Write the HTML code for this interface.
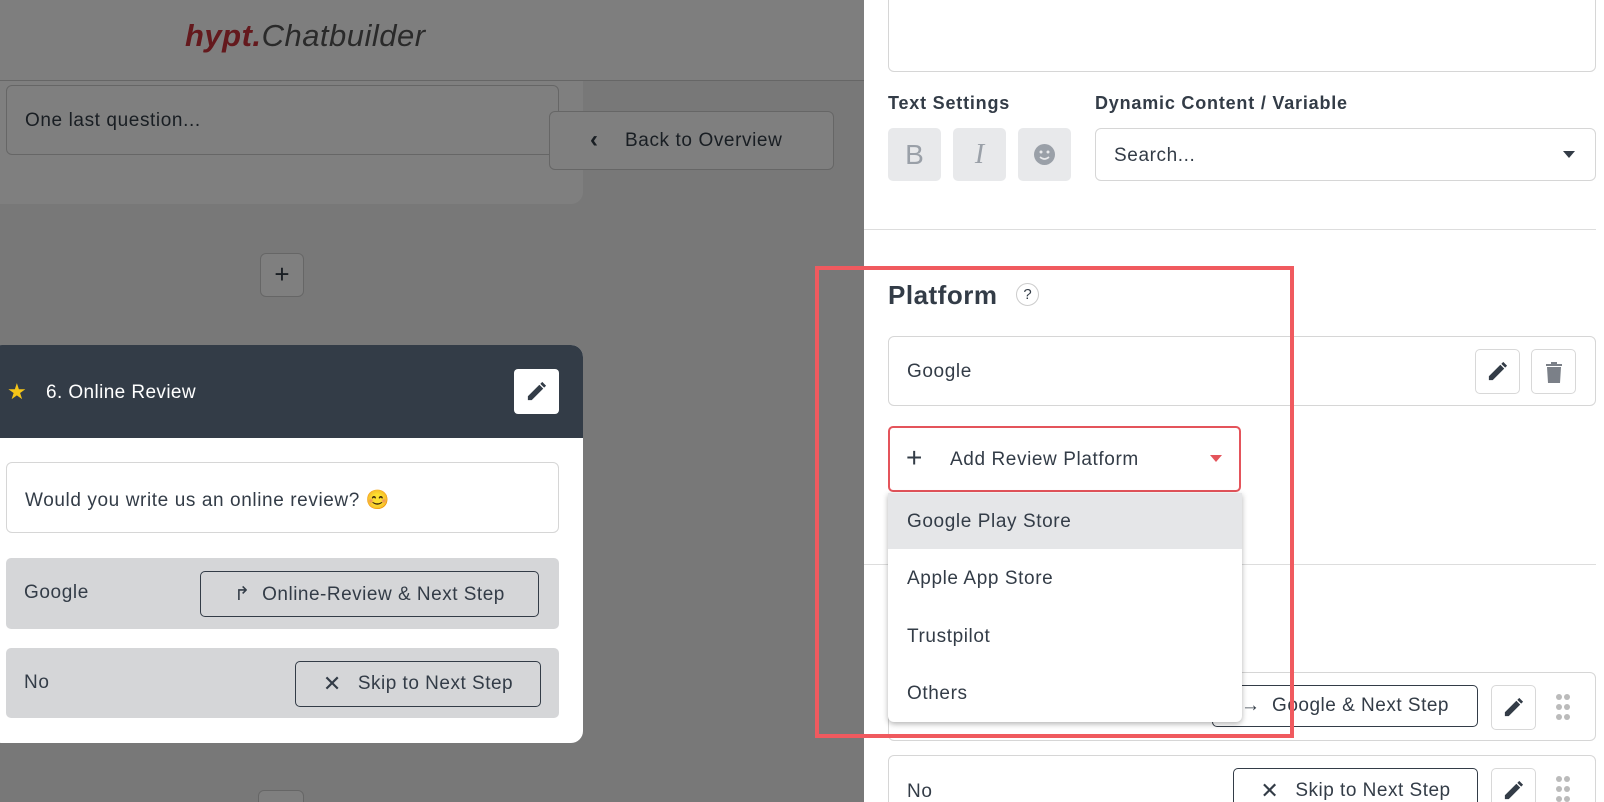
<!DOCTYPE html>
<html style="width:1604px;height:802px;overflow:hidden"><head><meta charset="utf-8"><style>
*{box-sizing:border-box;margin:0;padding:0}
body{width:1604px;height:802px;overflow:hidden;position:relative;background:#f1f1f1;font-family:"Liberation Sans",sans-serif;color:#333c47}
.a{position:absolute}
.box{position:absolute;border:1px solid #d6d6d6;border-radius:6px;background:#fff}
.btn{position:absolute;border:1px solid #333c47;border-radius:5px;display:flex;align-items:center;justify-content:center;gap:16px;font-size:19px;letter-spacing:.5px;color:#333c47;background:transparent}
.ib{position:absolute;border:1px solid #d8d8d8;border-radius:5px;background:#fff;display:flex;align-items:center;justify-content:center}
.t{font-size:19px;letter-spacing:.6px}
</style></head><body>
<div class="a" style="left:0;top:0;width:864px;height:81px;background:#fdfdfd;border-bottom:1px solid #ccc"></div>
<div class="a" style="left:185px;top:18px;font-size:31px;font-style:italic;letter-spacing:.5px"><span style="color:#c8323b;font-weight:bold">hypt.</span><span style="color:#555">Chatbuilder</span></div>
<div class="a" style="left:-10px;top:81px;width:593px;height:123px;background:#fff;border-radius:0 0 12px 0"></div>
<div class="box" style="left:6px;top:85px;width:553px;height:70px;border-color:#ccc"><span class="a t" style="left:18px;top:24px">One last question...</span></div>
<div class="box" style="left:549px;top:111px;width:285px;height:59px;border-color:#ccc"><span class="a" style="left:40px;top:14px;font-size:24px;font-weight:bold">‹</span><span class="a t" style="left:75px;top:18px">Back to Overview</span></div>
<div class="box" style="left:260px;top:253px;width:44px;height:44px;border-color:#ccc;font-size:26px;text-align:center;line-height:40px">+</div>
<div class="box" style="left:258px;top:790px;width:46px;height:40px;border-color:#ccc"></div>
<div class="a" style="left:0;top:0;width:864px;height:802px;background:rgba(0,0,0,0.5)"></div>
<div class="a" style="left:-10px;top:345px;width:593px;height:398px;background:#fff;border-radius:12px;overflow:hidden">
 <div class="a" style="left:0;top:0;width:593px;height:93px;background:#333c47"></div>
 <span class="a" style="left:17px;top:34px;font-size:22px;color:#f5c518">★</span>
 <span class="a" style="left:56px;top:37px;font-size:19px;letter-spacing:.4px;color:#fff">6. Online Review</span>
 <div class="a" style="left:524px;top:24px;width:45px;height:45px;background:#fff;border-radius:4px"><svg class="a" style="left:11px;top:11px" width="23" height="23" viewBox="0 0 24 24"><path d="M3 21v-4L15 5l4 4L7 21z M16 4l2-2 4 4-2 2z" fill="#333c47"/></svg></div>
 <div class="box" style="left:16px;top:117px;width:553px;height:71px"><span class="a t" style="left:18px;top:25px">Would you write us an online review? 😊</span></div>
 <div class="a" style="left:16px;top:213px;width:553px;height:71px;background:#d5d6d8;border-radius:5px"><span class="a t" style="left:18px;top:24px">Google</span>
  <div class="btn" style="left:194px;top:13px;width:339px;height:46px">↱ &nbsp;Online-Review &amp; Next Step</div></div>
 <div class="a" style="left:16px;top:303px;width:553px;height:70px;background:#d5d6d8;border-radius:5px"><span class="a t" style="left:18px;top:24px">No</span>
  <div class="btn" style="left:289px;top:13px;width:246px;height:46px"><span style="font-size:22px">✕</span>Skip to Next Step</div></div>
</div>
<div class="a" style="left:864px;top:0;width:740px;height:802px;background:#fff"></div>
<div class="box" style="left:888px;top:-10px;width:708px;height:82px"></div>
<div class="a" style="left:888px;top:93px;font-size:18px;font-weight:bold;letter-spacing:.8px">Text Settings</div>
<div class="a" style="left:1095px;top:93px;font-size:18px;font-weight:bold;letter-spacing:.8px">Dynamic Content / Variable</div>
<div class="a" style="left:888px;top:128px;width:53px;height:53px;background:#e8e9eb;border-radius:5px;color:#9aa0a8;font-size:28px;text-align:center;line-height:53px">B</div>
<div class="a" style="left:953px;top:128px;width:53px;height:53px;background:#e8e9eb;border-radius:5px;color:#9aa0a8;font-size:28px;font-style:italic;text-align:center;line-height:53px;font-family:'Liberation Serif',serif">I</div>
<div class="a" style="left:1018px;top:128px;width:53px;height:53px;background:#e8e9eb;border-radius:5px"><svg class="a" style="left:16px;top:16px" width="21" height="21" viewBox="0 0 21 21"><circle cx="10.5" cy="10.5" r="10.5" fill="#9aa0a8"/><circle cx="7" cy="8" r="1.5" fill="#e8e9eb"/><circle cx="14" cy="8" r="1.5" fill="#e8e9eb"/><path d="M6 13q4.5 4 9 0" stroke="#e8e9eb" stroke-width="1.6" fill="none"/></svg></div>
<div class="box" style="left:1095px;top:128px;width:501px;height:53px"><span class="a t" style="left:18px;top:16px">Search...</span><span class="a" style="left:467px;top:22px;border:6px solid transparent;border-top:7px solid #333c47"></span></div>
<div class="a" style="left:864px;top:229px;width:732px;height:1px;background:#ddd"></div>
<div class="a" style="left:888px;top:280px;font-size:26px;font-weight:bold;letter-spacing:.5px">Platform</div>
<div class="a" style="left:1016px;top:283px;width:23px;height:23px;border:1px solid #ccc;border-radius:50%;font-size:15px;text-align:center;line-height:21px">?</div>
<div class="box" style="left:888px;top:336px;width:708px;height:70px"><span class="a t" style="left:18px;top:24px">Google</span></div>
<div class="ib" style="left:1475px;top:349px;width:45px;height:45px"><svg width="23" height="23" viewBox="0 0 24 24"><path d="M3 21v-4L15 5l4 4L7 21z M16 4l2-2 4 4-2 2z" fill="#333c47"/></svg></div>
<div class="ib" style="left:1531px;top:349px;width:45px;height:45px"><svg width="20" height="24" viewBox="0 0 20 24"><path d="M2 4h16v2H2z M7 2h6v2H7z M3 7h14l-1 16H4z" fill="#7b8088"/></svg></div>
<div class="a" style="left:864px;top:564px;width:732px;height:1px;background:#ddd"></div>
<div class="box" style="left:888px;top:672px;width:708px;height:69px"></div>
<div class="btn" style="left:1212px;top:685px;width:266px;height:42px">→ &nbsp;Google &amp; Next Step</div>
<div class="ib" style="left:1491px;top:685px;width:45px;height:45px"><svg width="23" height="23" viewBox="0 0 24 24"><path d="M3 21v-4L15 5l4 4L7 21z M16 4l2-2 4 4-2 2z" fill="#333c47"/></svg></div>
<svg class="a" style="left:1555px;top:693px" width="16" height="28"><g fill="#bbb"><circle cx="4" cy="4" r="3"/><circle cx="12" cy="4" r="3"/><circle cx="4" cy="14" r="3"/><circle cx="12" cy="14" r="3"/><circle cx="4" cy="24" r="3"/><circle cx="12" cy="24" r="3"/></g></svg>
<div class="box" style="left:888px;top:755px;width:708px;height:69px"><span class="a t" style="left:18px;top:25px">No</span></div>
<div class="btn" style="left:1233px;top:768px;width:245px;height:46px"><span style="font-size:22px">✕</span>Skip to Next Step</div>
<div class="ib" style="left:1491px;top:768px;width:45px;height:45px"><svg width="23" height="23" viewBox="0 0 24 24"><path d="M3 21v-4L15 5l4 4L7 21z M16 4l2-2 4 4-2 2z" fill="#333c47"/></svg></div>
<svg class="a" style="left:1555px;top:775px" width="16" height="28"><g fill="#bbb"><circle cx="4" cy="4" r="3"/><circle cx="12" cy="4" r="3"/><circle cx="4" cy="14" r="3"/><circle cx="12" cy="14" r="3"/><circle cx="4" cy="24" r="3"/><circle cx="12" cy="24" r="3"/></g></svg>
<div class="a" style="left:888px;top:426px;width:353px;height:66px;border:2px solid #e4545b;border-radius:5px;background:#fff">
 <span class="a" style="left:16px;top:14px;font-size:28px;font-weight:300">+</span>
 <span class="a t" style="left:60px;top:21px">Add Review Platform</span>
 <span class="a" style="left:320px;top:27px;border:6px solid transparent;border-top:7px solid #e4545b"></span></div>
<div class="a" style="left:888px;top:493px;width:354px;height:229px;background:#fff;border-radius:0 0 6px 6px;box-shadow:0 2px 6px rgba(0,0,0,.3);overflow:hidden">
 <div class="a" style="left:0;top:0;width:354px;height:56px;background:#e5e6e8"></div>
 <span class="a t" style="left:19px;top:18px">Google Play Store</span>
 <span class="a t" style="left:19px;top:75px">Apple App Store</span>
 <span class="a t" style="left:19px;top:133px">Trustpilot</span>
 <span class="a t" style="left:19px;top:190px">Others</span>
</div>
<div class="a" style="left:815px;top:266px;width:479px;height:472px;border:4px solid #f05a5f"></div>
</body></html>
